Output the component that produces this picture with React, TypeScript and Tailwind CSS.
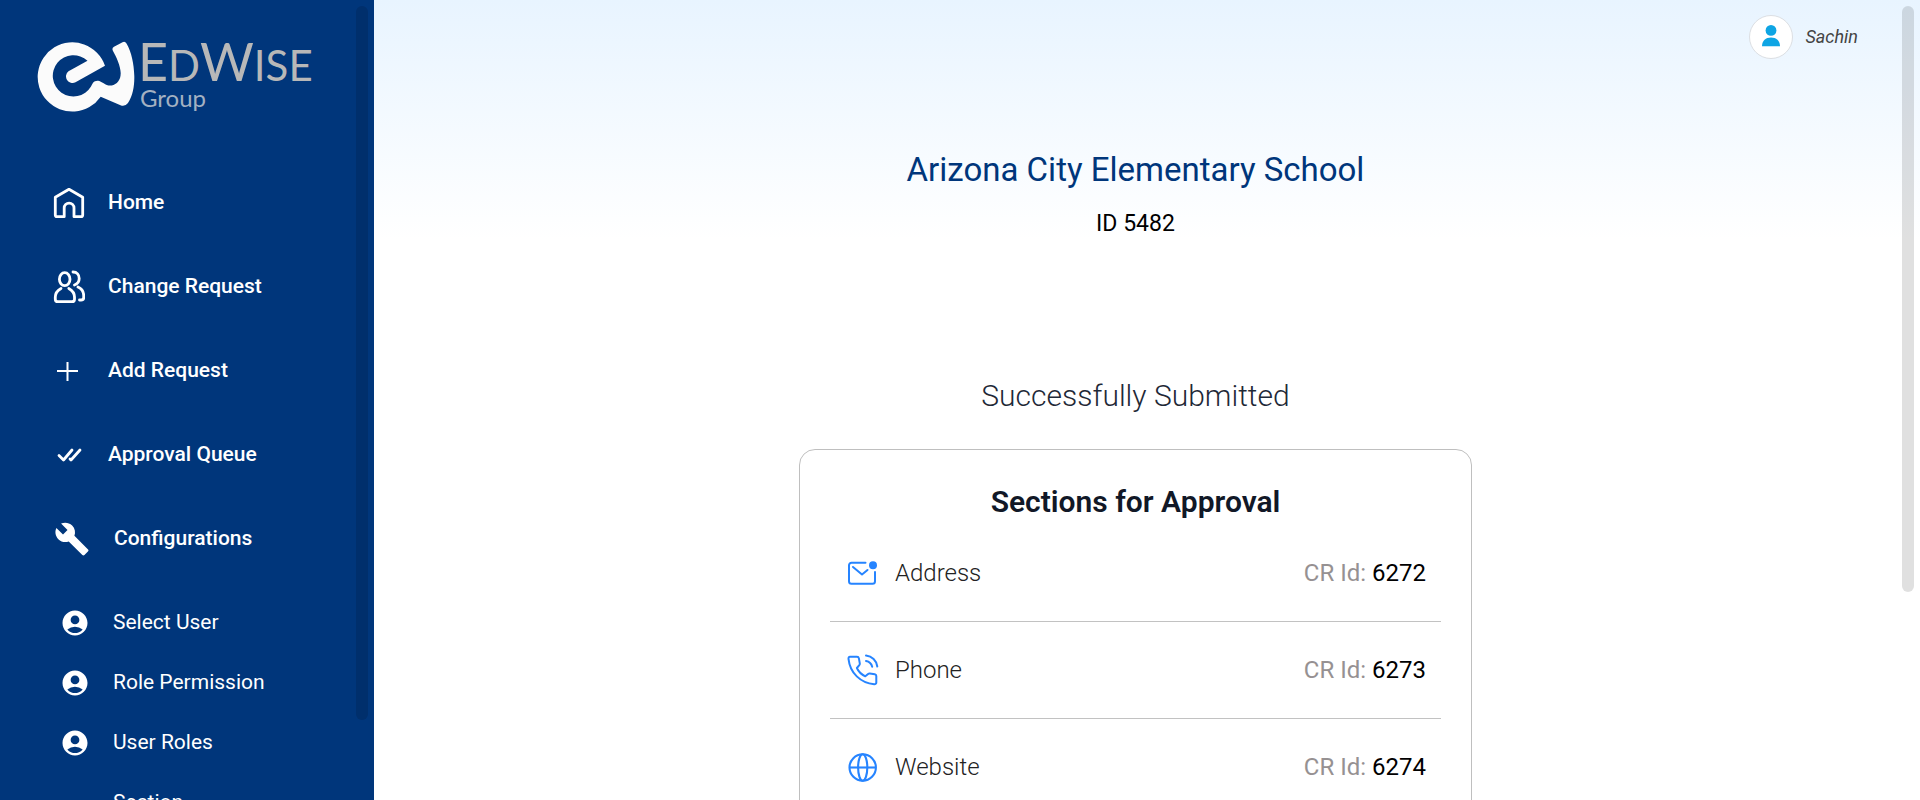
import React from "react";
import { MdAccountCircle, MdBuild } from "react-icons/md";

const HomeIcon = () => (
  <svg viewBox="0 0 32 32" className="size-8" fill="none" stroke="white" strokeWidth="2.8" strokeLinejoin="round">
    <path d="M2.3 10.2 16 2.3 29.7 10.2V28a1.7 1.7 0 0 1-1.7 1.7H21V21a4.8 4.8 0 0 0-9.8 0v8.7H4A1.7 1.7 0 0 1 2.3 28z" />
  </svg>
);

const UsersIcon = () => (
  <svg viewBox="0 0 32 34" className="h-[34px] w-8" fill="none" stroke="white" strokeWidth="2.8" strokeLinecap="round" strokeLinejoin="round">
    <ellipse cx="11.7" cy="9.2" rx="5.3" ry="6.5" />
    <path d="M8 18.5C4.5 20.5 2.3 23 2.3 27v2.2c0 1.6 1 2.5 2.6 2.5h14c1.6 0 2.6-.9 2.6-2.5V27c0-4-2.2-6.5-5.7-8.5" />
    <path d="M20 2c4 0 6.2 2.7 6.2 6.5 0 3-1.5 5.4-4.7 6.5M25 17c3.5 1.6 5.7 4.5 5.7 8.5v2c0 1.6-1 2.5-2.6 2.5h-1.6" />
  </svg>
);

const PlusIcon = () => (
  <svg viewBox="0 0 32 32" className="size-8" fill="none" stroke="white" strokeWidth="2">
    <path d="M4 16h21M14.5 7v19" />
  </svg>
);

const ChecksIcon = () => (
  <svg viewBox="0 0 32 32" className="size-8" fill="none" stroke="white" strokeWidth="2.8" strokeLinecap="round" strokeLinejoin="round">
    <path d="M6 16.500l4.500 4.500L19 11M17 20l1 1L27 11" />
  </svg>
);

const MailIcon = () => (
  <svg viewBox="0 0 32 32" className="size-8" fill="none" stroke="#2684ff" strokeWidth="2" strokeLinecap="round" strokeLinejoin="round">
    <path d="M18.5 5.7H4.5A2.5 2.5 0 0 0 2 8.2v16A2.5 2.5 0 0 0 4.5 26.700h21a2.500 2.500 0 0 0 2.500-2.500V15" />
    <path d="M6 10l9 7.500 5.500-4.500" />
    <circle cx="26" cy="8.300" r="4" fill="#2684ff" stroke="none" />
  </svg>
);

const PhoneIcon = () => (
  <svg viewBox="0 0 32 32" className="size-8" fill="none" stroke="#2684ff" strokeWidth="2" strokeLinecap="round" strokeLinejoin="round">
    <path d="M3 2.800h7c1 0 1.700.6 1.900 1.600l.9 5c.1.700-.1 1.300-.5 1.800L9.900 14c1.600 3.600 4.600 6.500 8.400 8.300l2.800-2.300c.5-.4 1-.6 1.700-.5l5 .8c.9.200 1.500.9 1.500 1.800v6.300c0 1.200-.9 1.900-2.100 1.800C13.500 29 3 19 1.500 4.800 1.400 3.600 1.900 2.800 3 2.800z" />
    <path d="M19 1.500c6 .7 10.500 5 11.300 11M19 7c3.300.6 5.500 2.700 6.200 5.800" />
  </svg>
);

const GlobeIcon = () => (
  <svg viewBox="0 0 32 32" className="size-8" fill="none" stroke="#2684ff" strokeWidth="2.100">
    <circle cx="15.700" cy="16.500" r="13.200" />
    <ellipse cx="15.700" cy="16.500" rx="4.600" ry="13.200" />
    <path d="M2.500 16.500h26.400" />
  </svg>
);

const Logo = () => (
  <div className="flex gap-0.5">
    <svg viewBox="0 0 100 74" className="h-[74px] w-[100px]" fill="#fbfbfb" aria-hidden="true">
      <path d="M69 25.700A34.600 34.600 0 1 0 64.700 56.700L84.500 65.300Q89 67 92 63C97 55 98.500 46 98.300 36 98 24 95.500 12 90.500 3.500Q89 1 86.500 2.300L78 6.800Q75.500 8.200 77 11C80.500 17 84.500 26 84.700 33 84.800 40 81 44.500 75.700 45.500 70 46.500 66 41 62 40.700 57.500 40.500 56.500 43.500 55 46.500A20.600 20.600 0 1 1 51.500 20.800L32.500 31.200A6.600 6.600 0 0 0 39.500 42.300Z" />
    </svg>
    <div className="flex flex-col text-[#b8b8b8]">
      <span className="font-['Lato',sans-serif] text-[52px] leading-[42px]">
        E<span className="text-[42px]">D</span>W<span className="text-[42px]">ISE</span>
      </span>
      <span className="pl-0.5 font-['Lato',sans-serif] text-[24px] leading-6 text-[#a3b1c2]">Group</span>
    </div>
  </div>
);

const mainLinks = [
  { label: "Home", icon: <HomeIcon /> },
  { label: "Change Request", icon: <UsersIcon /> },
  { label: "Add Request", icon: <PlusIcon /> },
  { label: "Approval Queue", icon: <ChecksIcon /> },
];

const subLinks = ["Select User", "Role Permission", "User Roles"];

const sections = [
  { label: "Address", id: 6272, icon: <MailIcon /> },
  { label: "Phone", id: 6273, icon: <PhoneIcon /> },
  { label: "Website", id: 6274, icon: <GlobeIcon /> },
];

export default function App() {
  return (
    <div className="relative flex h-screen overflow-hidden bg-white font-['Roboto',sans-serif] text-black">
      <aside className="relative w-[374px] shrink-0 overflow-hidden bg-[#00367b] text-[21px] text-white">
        <div className="pt-10 pl-9">
          <Logo />
        </div>
        <nav className="pt-[47px]" aria-label="Main">
          <ul className="font-medium">
            {mainLinks.map((link) => (
              <li key={link.label}>
                <a href="#" className="flex h-[84px] items-center gap-[23px] pl-[53px]">
                  {link.icon}
                  {link.label}
                </a>
              </li>
            ))}
            <li>
              <a href="#" className="flex h-[84px] items-center gap-6 pl-[54px]">
                <MdBuild className="size-9" />
                Configurations
              </a>
            </li>
          </ul>
          <ul className="pt-3">
            {subLinks.map((label) => (
              <li key={label}>
                <a href="#" className="flex h-[60px] items-center gap-[23px] pl-[60px]">
                  <MdAccountCircle className="size-[30px]" />
                  {label}
                </a>
              </li>
            ))}
            <li>
              <a href="#" className="flex h-[90px] items-center gap-[23px] pl-[60px]">
                <MdAccountCircle className="size-[30px]" />
                <span className="self-start pt-3.5">Section</span>
              </a>
            </li>
          </ul>
        </nav>
        <div className="absolute top-1.5 right-1.5 h-[714px] w-3 rounded-full bg-[#002f6c]" />
      </aside>

      <main className="min-w-0 flex-1 bg-[linear-gradient(to_bottom,#e8f4ff_0px,#ffffff_240px)]">
        <header className="flex h-[73px] items-center justify-end gap-3 pr-[62px]">
          <span className="flex size-11 items-center justify-center rounded-full border border-[#dcdfe3] bg-white">
            <svg viewBox="0 0 24 24" className="size-6" fill="#0ea5e4" aria-hidden="true">
              <circle cx="12" cy="5.400" r="5.400" />
              <path d="M3 21.300c0-5.500 3.800-8.800 9-8.800s9 3.300 9 8.800z" />
            </svg>
          </span>
          <span className="text-lg text-[#444] italic">Sachin</span>
        </header>
        <div className="flex flex-col items-center pr-[23px] pt-[73px]">
          <h1 className="text-[33px] leading-[48px] text-[#00367b]">Arizona City Elementary School</h1>
          <p className="pt-3 text-[23px] leading-9">ID 5482</p>
          <h2 className="pt-[131px] text-[30px] leading-[46px] font-light text-[#1f2937]">Successfully Submitted</h2>
          <section className="mt-[30px] w-[673px] max-w-full rounded-2xl border border-[#bfbfbf] bg-white px-[30px] pt-[29px]">
            <h3 className="text-center text-[30px] leading-[46px] font-semibold text-[#111827]">Sections for Approval</h3>
            <ul className="text-2xl">
              {sections.map((section) => (
                <li
                  key={section.id}
                  className="flex h-[97px] items-center border-b border-[#c2c2c2] pr-[15px] pl-[17px]"
                >
                  {section.icon}
                  <span className="pl-4 font-light text-[#222]">{section.label}</span>
                  <span className="ml-auto text-[#969192]">
                    CR Id: <span className="text-black">{section.id}</span>
                  </span>
                </li>
              ))}
            </ul>
          </section>
        </div>
      </main>
      <div className="absolute top-1.5 right-1.5 h-[586px] w-3 rounded-full bg-black/12" />
    </div>
  );
}
